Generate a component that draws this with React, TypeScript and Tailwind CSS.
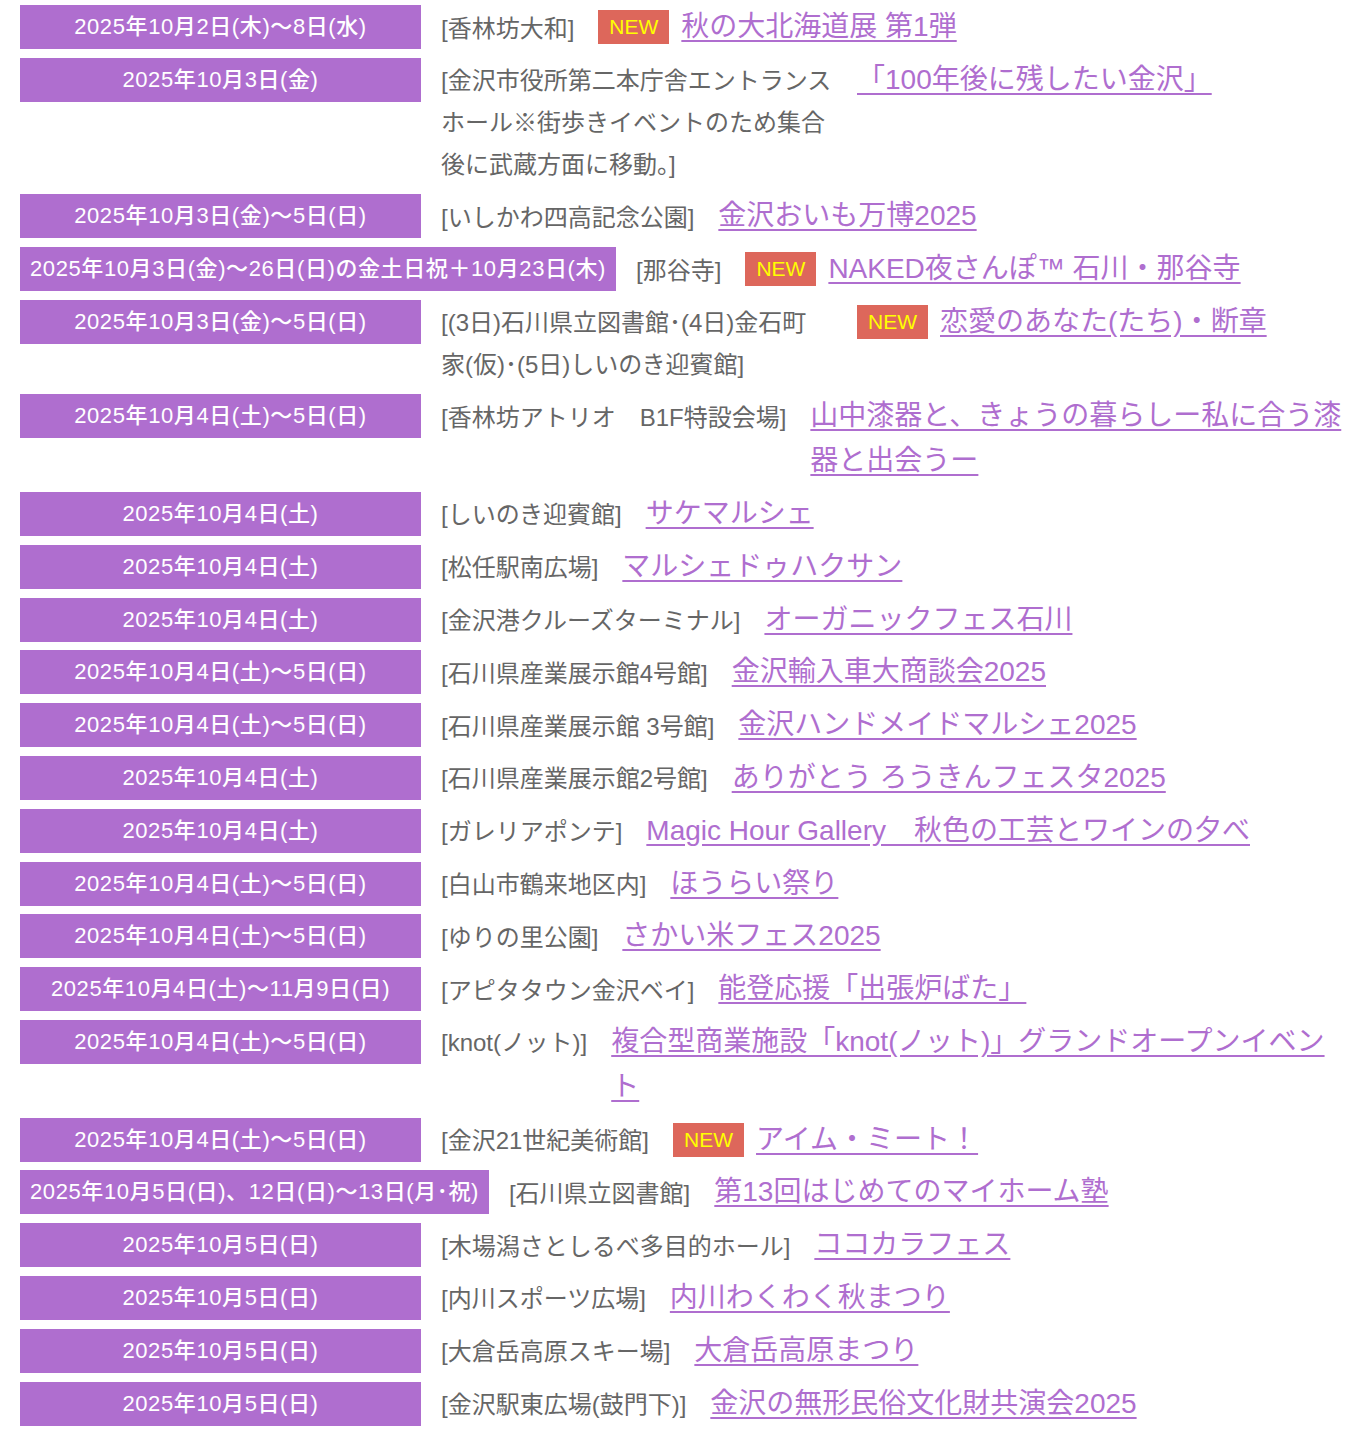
import React from "react";

type Row = { date: string; venue: React.ReactNode; link: string; isNew?: boolean; fullVenue?: boolean };

const rows: Row[] = [
  { date: "2025年10月2日(木)〜8日(水)", venue: "[香林坊大和]", link: "秋の大北海道展 第1弾", isNew: true },
  { date: "2025年10月3日(金)", venue: "[金沢市役所第二本庁舎エントランスホール※街歩きイベントのため集合後に武蔵方面に移動。]", link: "「100年後に残したい金沢」" },
  { date: "2025年10月3日(金)〜5日(日)", venue: "[いしかわ四高記念公園]", link: "金沢おいも万博2025" },
  { date: "2025年10月3日(金)〜26日(日)の金土日祝＋10月23日(木)", venue: "[那谷寺]", link: "NAKED夜さんぽ™ 石川・那谷寺", isNew: true },
  {
    date: "2025年10月3日(金)〜5日(日)",
    venue: (
      <>
        [(3日)石川県立図書館･(4日)金石町
        <br />
        家(仮)･(5日)しいのき迎賓館]
      </>
    ),
    link: "恋愛のあなた(たち)・断章",
    isNew: true,
    fullVenue: true,
  },
  { date: "2025年10月4日(土)〜5日(日)", venue: "[香林坊アトリオ　B1F特設会場]", link: "山中漆器と、きょうの暮らしー私に合う漆器と出会うー" },
  { date: "2025年10月4日(土)", venue: "[しいのき迎賓館]", link: "サケマルシェ" },
  { date: "2025年10月4日(土)", venue: "[松任駅南広場]", link: "マルシェドゥハクサン" },
  { date: "2025年10月4日(土)", venue: "[金沢港クルーズターミナル]", link: "オーガニックフェス石川" },
  { date: "2025年10月4日(土)〜5日(日)", venue: "[石川県産業展示館4号館]", link: "金沢輸入車大商談会2025" },
  { date: "2025年10月4日(土)〜5日(日)", venue: "[石川県産業展示館 3号館]", link: "金沢ハンドメイドマルシェ2025" },
  { date: "2025年10月4日(土)", venue: "[石川県産業展示館2号館]", link: "ありがとう ろうきんフェスタ2025" },
  { date: "2025年10月4日(土)", venue: "[ガレリアポンテ]", link: "Magic Hour Gallery　秋色の工芸とワインの夕べ" },
  { date: "2025年10月4日(土)〜5日(日)", venue: "[白山市鶴来地区内]", link: "ほうらい祭り" },
  { date: "2025年10月4日(土)〜5日(日)", venue: "[ゆりの里公園]", link: "さかい米フェス2025" },
  { date: "2025年10月4日(土)〜11月9日(日)", venue: "[アピタタウン金沢ベイ]", link: "能登応援「出張炉ばた」" },
  { date: "2025年10月4日(土)〜5日(日)", venue: "[knot(ノット)]", link: "複合型商業施設「knot(ノット)」グランドオープンイベント" },
  { date: "2025年10月4日(土)〜5日(日)", venue: "[金沢21世紀美術館]", link: "アイム・ミート！", isNew: true },
  { date: "2025年10月5日(日)、12日(日)〜13日(月･祝)", venue: "[石川県立図書館]", link: "第13回はじめてのマイホーム塾" },
  { date: "2025年10月5日(日)", venue: "[木場潟さとしるべ多目的ホール]", link: "ココカラフェス" },
  { date: "2025年10月5日(日)", venue: "[内川スポーツ広場]", link: "内川わくわく秋まつり" },
  { date: "2025年10月5日(日)", venue: "[大倉岳高原スキー場]", link: "大倉岳高原まつり" },
  { date: "2025年10月5日(日)", venue: "[金沢駅東広場(鼓門下)]", link: "金沢の無形民俗文化財共演会2025" },
];

export default function App() {
  return (
    <div
      className="bg-white w-[1354px] min-h-[1432px] pt-[5px] pl-[20px] pr-[10px] flex flex-col gap-[8px]"
      style={{ fontFamily: '"Liberation Sans", "Noto Sans CJK JP", sans-serif' }}
    >
      {rows.map((r, i) => (
        <div key={i} className="flex items-start">
          <div className="shrink-0 min-w-[401px] h-[44px] px-[10px] bg-[#af6ecf] text-white text-[22px] tracking-[0.6px] leading-[44px] text-center font-medium whitespace-nowrap">
            {r.date}
          </div>
          <div
            className={
              r.fullVenue
                ? "ml-[20px] mr-[24px] w-[392px] shrink-0 pt-[2.5px] text-[24px] leading-[42px] text-[#666666]"
                : "ml-[20px] mr-[24px] max-w-[392px] shrink-0 pt-[2.5px] text-[24px] leading-[42px] text-[#666666]"
            }
          >
            {r.venue}
          </div>
          {r.isNew && (
            <span className="shrink-0 mt-[5px] mr-[12px] h-[34px] w-[71px] bg-[#dd675b] text-[#ffff00] text-[21px] leading-[34px] text-center">
              NEW
            </span>
          )}
          <a
            href="#"
            className="min-w-0 flex-1 text-[28px] leading-[44.8px] text-[#af6ecf] underline decoration-[#af6ecf] underline-offset-[4px]"
          >
            {r.link}
          </a>
        </div>
      ))}
    </div>
  );
}
